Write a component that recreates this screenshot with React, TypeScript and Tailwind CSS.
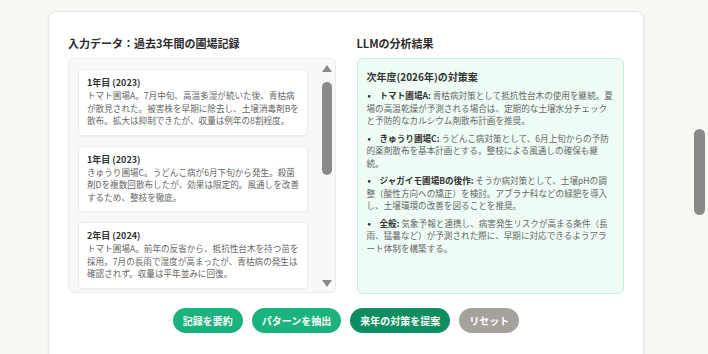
import React from "react";

const records = [
  {
    t: "1年目 (2023)",
    b: "トマト圃場A。7月中旬、高温多湿が続いた後、青枯病が散見された。被害株を早期に除去し、土壌消毒剤Bを散布。拡大は抑制できたが、収量は例年の8割程度。",
  },
  {
    t: "1年目 (2023)",
    b: "きゅうり圃場C。うどんこ病が6月下旬から発生。殺菌剤Dを複数回散布したが、効果は限定的。風通しを改善するため、整枝を徹底。",
  },
  {
    t: "2年目 (2024)",
    b: "トマト圃場A。前年の反省から、抵抗性台木を持つ苗を採用。7月の長雨で湿度が高まったが、青枯病の発生は確認されず。収量は平年並みに回復。",
  },
];

const items = [
  {
    l: "トマト圃場A:",
    b: "青枯病対策として抵抗性台木の使用を継続。夏場の高温乾燥が予測される場合は、定期的な土壌水分チェックと予防的なカルシウム剤散布計画を推奨。",
  },
  {
    l: "きゅうり圃場C:",
    b: "うどんこ病対策として、6月上旬からの予防的薬剤散布を基本計画とする。整枝による風通しの確保も継続。",
  },
  {
    l: "ジャガイモ圃場Bの後作:",
    b: "そうか病対策として、土壌pHの調整（酸性方向への矯正）を検討。アブラナ科などの緑肥を導入し、土壌環境の改善を図ることを推奨。",
  },
  {
    l: "全般:",
    b: "気象予報と連携し、病害発生リスクが高まる条件（長雨、猛暑など）が予測された際に、早期に対応できるようアラート体制を構築する。",
  },
];

export default function App() {
  return (
    <div
      className="relative h-[354px] w-[708px] overflow-hidden bg-[#f8f7f3] pl-[48px] pt-[11px]"
      style={{ fontFamily: '"Noto Sans CJK JP", "Noto Sans", sans-serif' }}
    >
      <div className="h-[350px] w-[596px] rounded-[8px] border border-[#e6e6e6] bg-white px-[19px] pt-[23px] shadow-[0_1px_3px_rgba(0,0,0,0.06)]">
        <div className="flex gap-[21px]">
          {/* left column */}
          <div className="w-[268px]">
            <h2 className="text-[11px] font-bold leading-[16px] text-[#2b2b2b]">
              入力データ：過去3年間の圃場記録
            </h2>
            <div className="mt-[7px] flex h-[235px] overflow-hidden rounded-[5px] border border-[#ececec] bg-[#f8f8f8]">
              <div className="flex w-[240px] shrink-0 flex-col gap-[10px] pl-[9px] pt-[10px]">
                {records.map((r, i) => (
                  <div
                    key={i}
                    className="w-[230px] shrink-0 rounded-[4px] border border-[#ebebeb] bg-white px-[8px] pb-[8px] pt-[6px] shadow-[0_1px_1px_rgba(0,0,0,0.03)]"
                  >
                    <div className="text-[9px] font-bold leading-[13px] text-[#333]">{r.t}</div>
                    <div className="text-[8.6px] leading-[12.5px] text-[#666]">{r.b}</div>
                  </div>
                ))}
              </div>
              <div className="ml-[11px] flex w-[14px] flex-col items-center pb-[5px] pt-[6px]">
                <div className="h-0 w-0 border-x-[5px] border-b-[7px] border-x-transparent border-b-[#8a8a8a]" />
                <div className="mt-[10px] h-[93px] w-[10px] rounded-full bg-[#8a8a8a]" />
                <div className="flex-1" />
                <div className="h-0 w-0 border-x-[5px] border-t-[7px] border-x-transparent border-t-[#8a8a8a]" />
              </div>
            </div>
          </div>
          {/* right column */}
          <div className="w-[268px]">
            <h2 className="text-[11px] font-bold leading-[16px] text-[#2b2b2b]">LLMの分析結果</h2>
            <div className="mt-[7px] h-[236px] rounded-[6px] border border-[#c6efdc] bg-[#eefcf5] px-[9px] pt-[11px]">
              <div className="text-[10px] font-bold leading-[14px] text-[#333]">次年度(2026年)の対策案</div>
              <div className="mt-[5px] flex flex-col gap-[5px]">
                {items.map((it, i) => (
                  <div key={i} className="text-[8.6px] leading-[12.5px] text-[#666]">
                    <span className="inline-block w-[13px] pl-[1px] font-bold text-[#222]">•</span>
                    <span className="font-bold text-[#333]">{it.l}</span> {it.b}
                  </div>
                ))}
              </div>
            </div>
          </div>
        </div>
        <div className="mt-[14px] flex justify-center gap-[9px]">
          <button className="h-[25px] rounded-full bg-[#1bb27d] px-[10px] text-[10px] font-bold leading-[25px] text-white">
            記録を要約
          </button>
          <button className="h-[25px] rounded-full bg-[#1bb27d] px-[10px] text-[10px] font-bold leading-[25px] text-white">
            パターンを抽出
          </button>
          <button className="h-[25px] rounded-full bg-[#0e8e60] px-[10px] text-[10px] font-bold leading-[25px] text-white">
            来年の対策を提案
          </button>
          <button className="h-[25px] rounded-full bg-[#a5a19d] px-[10px] text-[10px] font-bold leading-[25px] text-white">
            リセット
          </button>
        </div>
      </div>
      <div className="absolute right-[3px] top-[129px] h-[86px] w-[11px] rounded-full bg-[#888888]" />
    </div>
  );
}
